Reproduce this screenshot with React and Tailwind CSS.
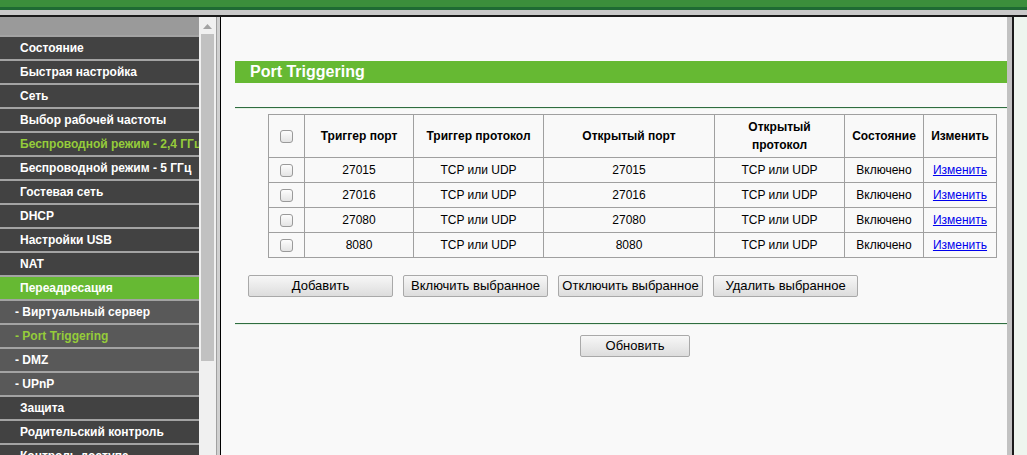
import React from "react";

const menu = [
  { label: "Состояние", kind: "main" },
  { label: "Быстрая настройка", kind: "main" },
  { label: "Сеть", kind: "main" },
  { label: "Выбор рабочей частоты", kind: "main" },
  { label: "Беспроводной режим - 2,4 ГГц", kind: "main", lit: true },
  { label: "Беспроводной режим - 5 ГГц", kind: "main" },
  { label: "Гостевая сеть", kind: "main" },
  { label: "DHCP", kind: "main" },
  { label: "Настройки USB", kind: "main" },
  { label: "NAT", kind: "main" },
  { label: "Переадресация", kind: "active" },
  { label: "- Виртуальный сервер", kind: "sub" },
  { label: "- Port Triggering", kind: "sub", lit: true },
  { label: "- DMZ", kind: "sub" },
  { label: "- UPnP", kind: "sub" },
  { label: "Защита", kind: "main" },
  { label: "Родительский контроль", kind: "main" },
  { label: "Контроль доступа", kind: "main" },
];

const rows = [
  { trig: "27015", open: "27015" },
  { trig: "27016", open: "27016" },
  { trig: "27080", open: "27080" },
  { trig: "8080", open: "8080" },
];

function Box() {
  return (
    <span className="inline-block w-[13px] h-[13px] rounded-[3px] border border-[#9a9a9a] bg-gradient-to-b from-[#fdfdfd] to-[#e4e4e4] align-middle" />
  );
}

function Btn({ children, className }) {
  return (
    <button
      className={
        "h-[22px] rounded-[2px] border border-[#a9a9a9] bg-gradient-to-b from-[#f7f7f7] to-[#dddddd] text-[13px] leading-[20px] text-black " +
        className
      }
    >
      {children}
    </button>
  );
}

function MenuItem({ item }) {
  const bg =
    item.kind === "active"
      ? "bg-[#66b933]"
      : item.kind === "sub"
      ? "bg-[#595959]"
      : "bg-[#424242]";
  const pad = item.kind === "sub" ? "pl-[15px]" : "pl-[20px]";
  const color = item.lit ? "text-[#95cc3a]" : "text-white";
  return (
    <div
      className={`h-[24px] shrink-0 border-b-2 border-[#a3a3a3] ${bg} ${pad} ${color} overflow-hidden whitespace-nowrap text-[12px] font-bold leading-[22px]`}
    >
      {item.label}
    </div>
  );
}

export default function App() {
  const th = "border border-[#a0a0a0] font-bold text-center align-middle";
  const td = "border border-[#a0a0a0] text-center align-middle h-[25px]";
  return (
    <div
      className="w-[1027px] h-[455px] overflow-hidden flex flex-col bg-[#f9f9f9]"
      style={{ fontFamily: '"Liberation Sans", Arial, sans-serif' }}
    >
      {/* top banner strip */}
      <div className="h-[7px] shrink-0 bg-[#3b8e3b]" />
      <div className="h-[3px] shrink-0 bg-[#1e6a33]" />
      <div className="h-[5px] shrink-0 bg-[#c9c9c9]" />
      <div className="h-[2px] shrink-0 bg-[#1a1a1a]" />

      <div className="flex flex-1 min-h-0">
        {/* menu frame */}
        <div className="w-[199px] flex flex-col overflow-hidden bg-[#424242]">
          <div className="h-[20px] shrink-0 bg-[#9a9a9a] border-b-2 border-[#a3a3a3]" />
          {menu.map((m) => (
            <MenuItem key={m.label} item={m} />
          ))}
        </div>

        {/* menu scrollbar */}
        <div className="w-[17px] bg-[#f0f0f0] flex flex-col items-center pt-[7px]">
          <svg width="9" height="5" viewBox="0 0 9 5">
            <path d="M0 5 L4.5 0 L9 5 Z" fill="#a3a3a3" />
          </svg>
          <div className="mt-[5px] w-[13px] h-[327px] bg-[#c1c1c1]" />
        </div>

        {/* frame divider */}
        <div className="w-px bg-[#a0a0a0]" />
        <div className="w-[3px] bg-[#d0d0d0]" />
        <div className="w-px bg-black" />

        {/* main frame */}
        <div className="w-[786px] bg-[#f9f9f9] pl-[14px] pt-[44px]">
          <div className="h-[22px] bg-[#66b933] pl-[15px] text-white font-bold text-[16px] leading-[22px]">
            Port Triggering
          </div>

          <div className="mt-[24px] h-px bg-[#2f6d40]" />
          <div className="h-px bg-[#e4f0e4]" />

          <table className="mt-[5px] ml-[33px] w-[728px] table-fixed border-collapse text-[12px] text-black">
            <colgroup>
              <col className="w-[36px]" />
              <col className="w-[109px]" />
              <col className="w-[130px]" />
              <col className="w-[171px]" />
              <col className="w-[130px]" />
              <col className="w-[79px]" />
              <col className="w-[73px]" />
            </colgroup>
            <thead>
              <tr className="h-[43px]">
                <th className={th}>
                  <Box />
                </th>
                <th className={th}>Триггер порт</th>
                <th className={th}>Триггер протокол</th>
                <th className={th}>Открытый порт</th>
                <th className={th + " leading-[18px]"}>
                  Открытый
                  <br />
                  протокол
                </th>
                <th className={th}>Состояние</th>
                <th className={th}>Изменить</th>
              </tr>
            </thead>
            <tbody>
              {rows.map((r) => (
                <tr key={r.trig}>
                  <td className={td}>
                    <Box />
                  </td>
                  <td className={td}>{r.trig}</td>
                  <td className={td}>TCP или UDP</td>
                  <td className={td}>{r.open}</td>
                  <td className={td}>TCP или UDP</td>
                  <td className={td}>Включено</td>
                  <td className={td}>
                    <a href="#" className="text-[#0000ee] underline">
                      Изменить
                    </a>
                  </td>
                </tr>
              ))}
            </tbody>
          </table>

          <div className="mt-[17px] ml-[13px] flex gap-[10px]">
            <Btn className="w-[145px]">Добавить</Btn>
            <Btn className="w-[145px]">Включить выбранное</Btn>
            <Btn className="w-[145px]">Отключить выбранное</Btn>
            <Btn className="w-[145px]">Удалить выбранное</Btn>
          </div>

          <div className="mt-[26px] h-px bg-[#2f6d40]" />
          <div className="h-px bg-[#e4f0e4]" />

          <div className="mt-[8px] ml-[345px]">
            <Btn className="w-[110px]">Обновить</Btn>
          </div>
        </div>

        {/* right frame edge */}
        <div className="w-[5px] bg-[#c2c2c2]" />
        <div className="w-[2px] bg-[#1a1a1a]" />
        <div className="flex-1 bg-[#eef5ee]" />
      </div>
    </div>
  );
}
